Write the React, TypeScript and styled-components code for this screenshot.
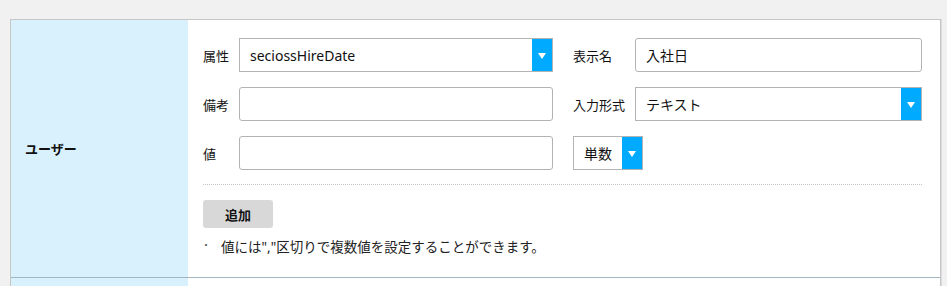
import React from "react"
import styled, { createGlobalStyle } from "styled-components"

const GlobalStyle = createGlobalStyle`
  html, body {
    margin: 0;
    padding: 0;
    background: #f1f1f1;
  }
  body {
    font-family: "Noto Sans", "Noto Sans CJK JP", sans-serif;
    font-size: 13px;
    color: #111;
  }
`

const Page = styled.div`
  padding: 19px 8px 0 10px;
  height: 286px;
  box-sizing: border-box;
  overflow: hidden;
`

const Card = styled.div`
  width: 929px;
  border: 1px solid #c6c6c6;
  border-bottom: none;
  background: #fff;
  box-shadow: 1px 0 0 #dcdcdc;
`

const Row = styled.div`
  display: flex;
  border-bottom: 1px solid #a3b6bd;
`

const HeadCell = styled.div`
  width: 177px;
  flex-shrink: 0;
  background: #d9f0fd;
  display: flex;
  align-items: center;
  padding-left: 14px;
  box-sizing: border-box;
  font-weight: 700;
  font-size: 13px;
`

const BodyCell = styled.div<{ $min?: number }>`
  flex: 1;
  padding: 18px 16px 21px 15px;
  min-height: ${p => p.$min ?? 0}px;
`

const FieldGrid = styled.div`
  display: grid;
  grid-template-columns: 36px 314px 82px 287px;
  row-gap: 15px;
  align-items: center;
`

const Label = styled.span<{ $indent?: boolean }>`
  font-size: 13px;
  white-space: nowrap;
  padding-left: ${p => (p.$indent ? 20 : 0)}px;
`

const TextInput = styled.div`
  height: 34px;
  border: 1px solid #b3b3b3;
  border-radius: 3px;
  box-sizing: border-box;
  display: flex;
  align-items: center;
  padding-left: 10px;
  font-size: 14px;
`

const SelectBox = styled.div<{ $span?: boolean; $width?: number }>`
  height: 34px;
  border: 1px solid #b3b3b3;
  box-sizing: border-box;
  display: flex;
  align-items: stretch;
  font-size: 14px;
  ${p => (p.$width ? `width: ${p.$width}px;` : "")}
  ${p => (p.$span ? "grid-column: 3 / span 2; margin-left: 20px; justify-self: start;" : "")}
`

const SelectValue = styled.div`
  flex: 1;
  display: flex;
  align-items: center;
  padding-left: 10px;
  white-space: nowrap;
`

const SelectArrow = styled.div`
  width: 20px;
  flex-shrink: 0;
  background: #00aaff;
  display: flex;
  align-items: center;
  justify-content: center;
  &::after {
    content: "";
    border-left: 4px solid transparent;
    border-right: 4px solid transparent;
    border-top: 6px solid #fff;
    margin-top: 1px;
  }
`

const Divider = styled.div`
  border-top: 1px dotted #c4c4c4;
  margin: 14px 0 15px 0;
  width: 719px;
`

const AddButton = styled.button`
  display: block;
  width: 70px;
  height: 28px;
  border: none;
  border-radius: 3px;
  background: #d8d8d8;
  font-family: inherit;
  font-weight: 700;
  font-size: 13px;
  color: #111;
  padding: 0;
`

const Note = styled.div`
  display: flex;
  gap: 10px;
  margin-top: 8px;
  font-size: 13.5px;
  color: #222;
  &::before {
    content: "・";
    font-size: 10px;
    color: #555;
    margin-left: -2px;
    line-height: 19px;
  }
`

const Select = ({ value, width, span }: { value: string; width?: number; span?: boolean }) => (
  <SelectBox $width={width} $span={span}>
    <SelectValue>{value}</SelectValue>
    <SelectArrow />
  </SelectBox>
)

export default function App() {
  return (
    <>
      <GlobalStyle />
      <Page>
        <Card>
          <Row>
            <HeadCell>ユーザー</HeadCell>
            <BodyCell>
              <FieldGrid>
                <Label>属性</Label>
                <Select value="seciossHireDate" />
                <Label $indent>表示名</Label>
                <TextInput>入社日</TextInput>

                <Label>備考</Label>
                <TextInput />
                <Label $indent>入力形式</Label>
                <Select value="テキスト" />

                <Label>値</Label>
                <TextInput />
                <Select value="単数" width={70} span />
              </FieldGrid>
              <Divider />
              <AddButton>追加</AddButton>
              <Note>値には","区切りで複数値を設定することができます。</Note>
            </BodyCell>
          </Row>
          <Row>
            <HeadCell />
            <BodyCell $min={40} />
          </Row>
        </Card>
      </Page>
    </>
  )
}
